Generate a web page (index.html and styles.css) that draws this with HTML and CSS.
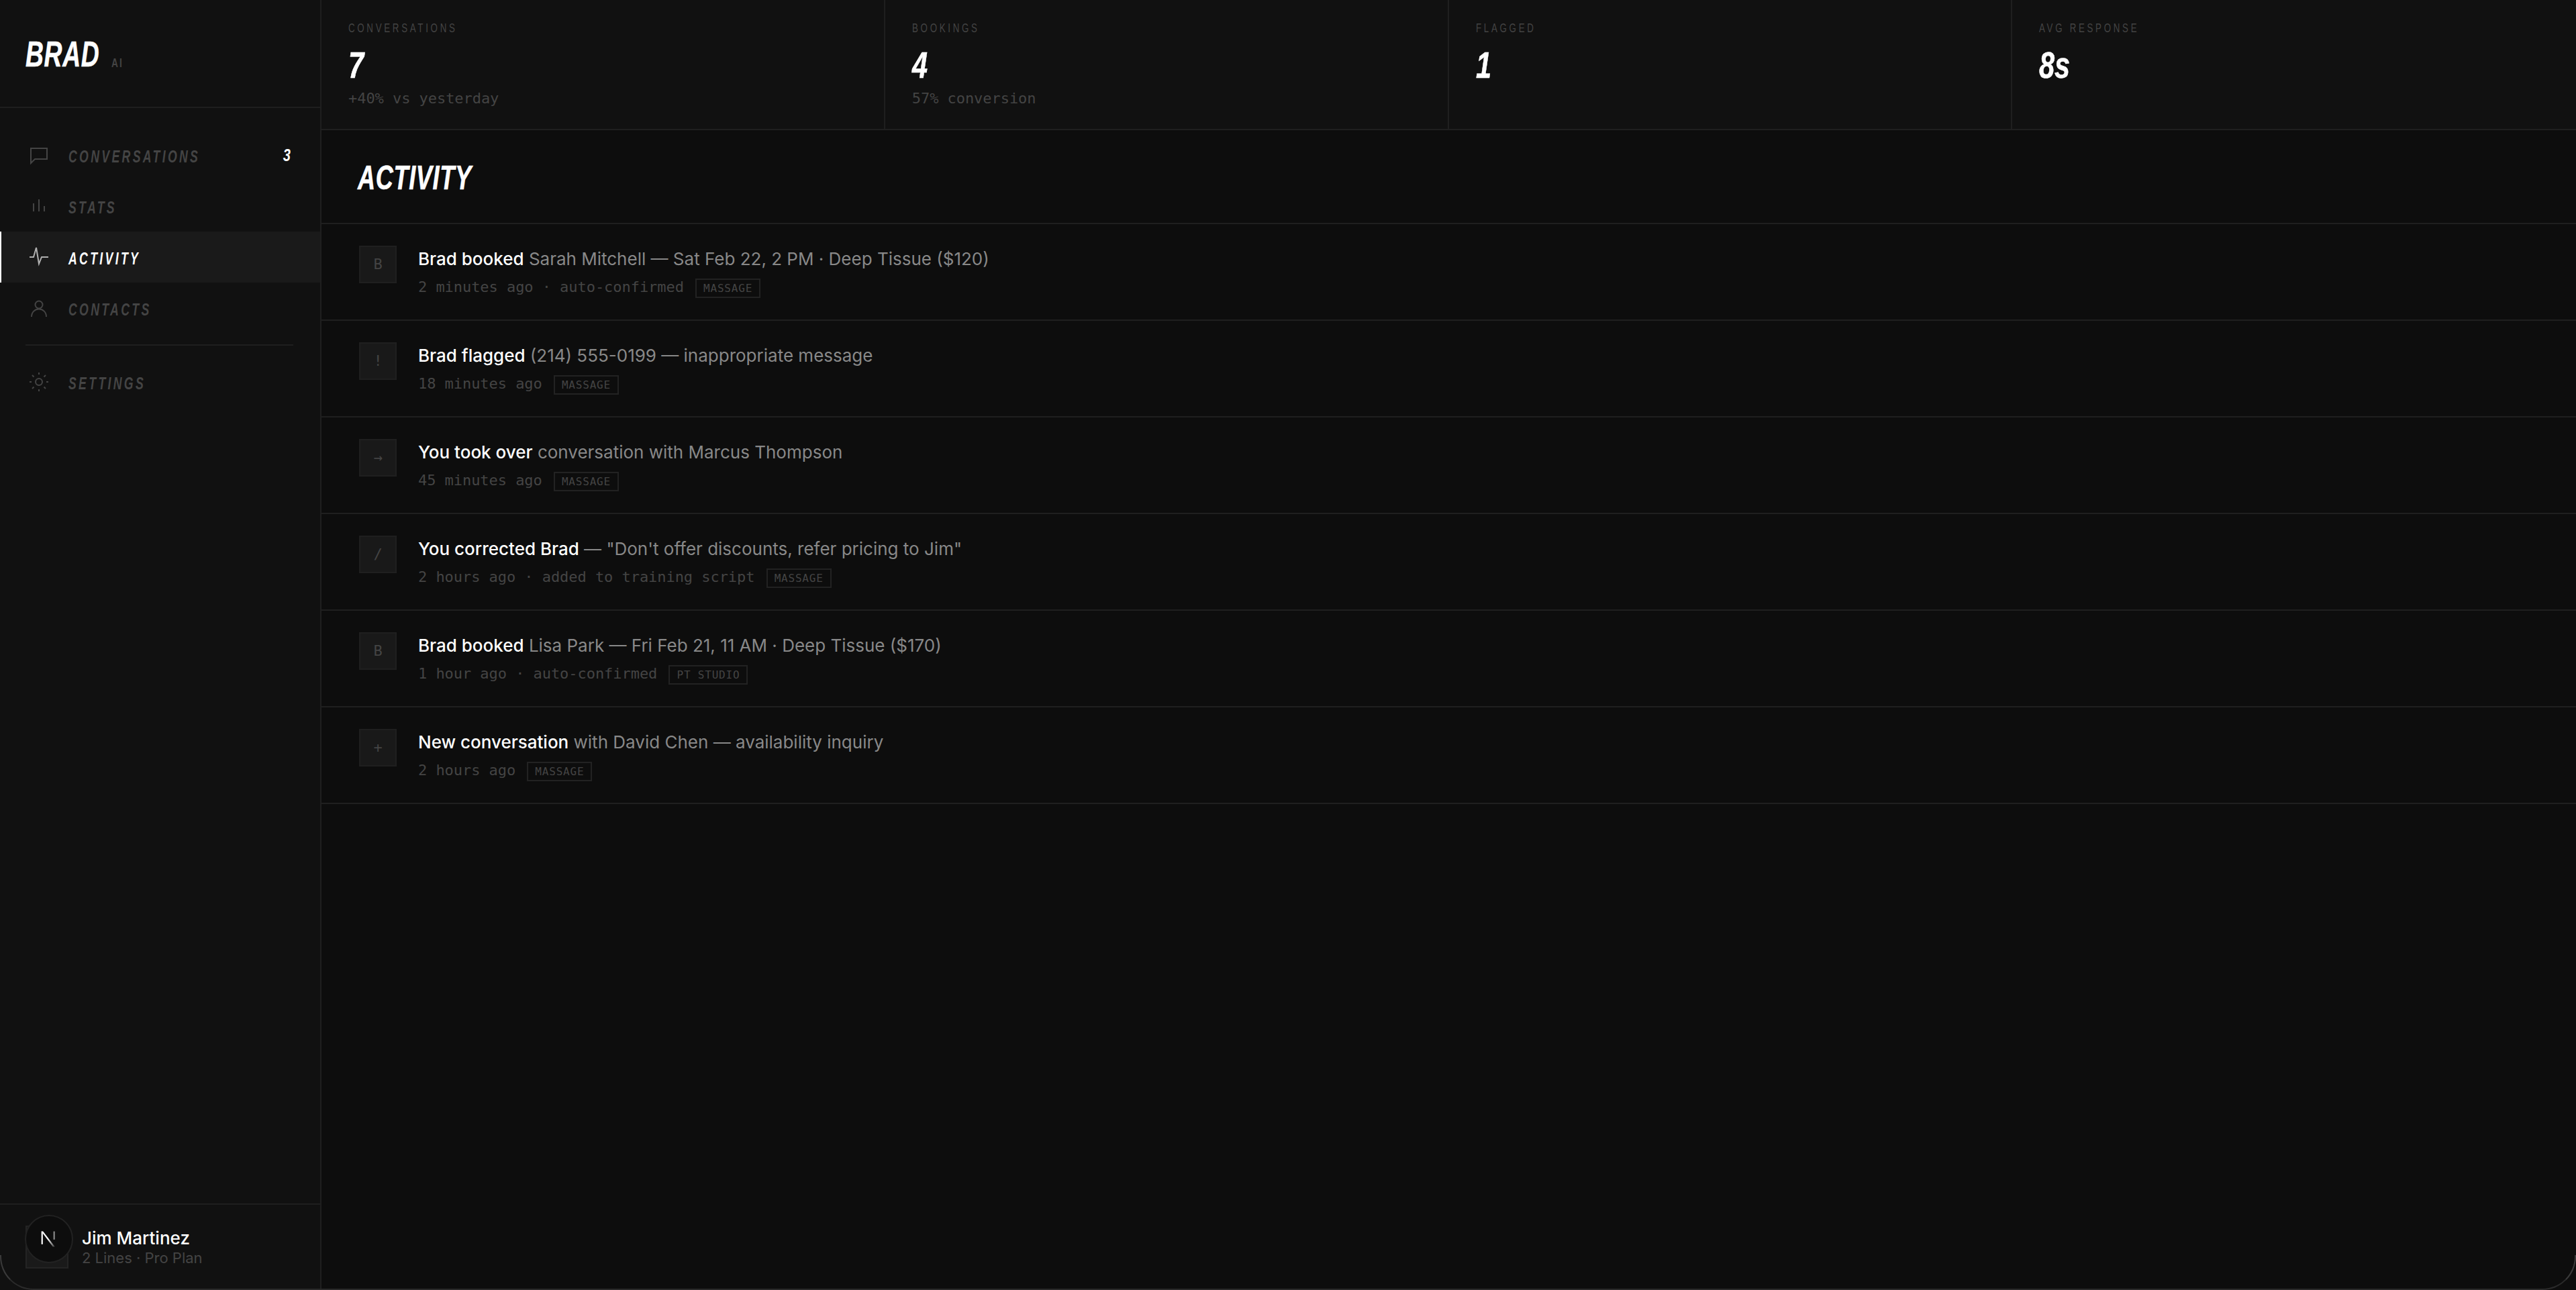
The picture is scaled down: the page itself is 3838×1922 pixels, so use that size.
FILE: index.html
```html
<!DOCTYPE html>
<html lang="en">
<head>
  <meta charset="UTF-8" />
  <title>Brad AI - Activity</title>
  <link rel="stylesheet" href="styles.css">
</head>
<body>
  <div class="app">
    <aside class="sidebar">
      <div class="logo"><span class="logo-name">BRAD</span><span class="logo-tag">AI</span></div>
      <nav class="nav">
        <a class="nav-item">
          <svg class="nav-icon" viewBox="0 0 32 32"><path d="M4 6h24v16H10l-6 6z"/></svg>
          <span class="nav-label">CONVERSATIONS</span>
          <span class="nav-count">3</span>
        </a>
        <a class="nav-item">
          <svg class="nav-icon" viewBox="0 0 32 32"><path d="M8 12v12M16 6v18M24 16v8"/></svg>
          <span class="nav-label">STATS</span>
        </a>
        <a class="nav-item active">
          <svg class="nav-icon" viewBox="0 0 32 32"><path d="M2 16h6l4-14 4 24 4-10h10"/></svg>
          <span class="nav-label">ACTIVITY</span>
        </a>
        <a class="nav-item">
          <svg class="nav-icon" viewBox="0 0 32 32"><circle cx="16" cy="11" r="5.500"/><path d="M5 29c0-7 5-11.500 11-11.500s11 4.500 11 11.500"/></svg>
          <span class="nav-label">CONTACTS</span>
        </a>
        <div class="nav-divider"></div>
        <a class="nav-item">
          <svg class="nav-icon" viewBox="0 0 32 32"><circle cx="16" cy="16" r="5"/><path d="M16 2v3M16 27v3M2 16h3M27 16h3M6 6l2.500 2.500M23.500 23.500L26 26M6 26l2.500-2.500M23.500 8.500L26 6"/></svg>
          <span class="nav-label">SETTINGS</span>
        </a>
      </nav>
      <div class="user">
        <div class="user-avatar"></div>
        <div class="user-info">
          <div class="user-name">Jim Martinez</div>
          <div class="user-plan">2 Lines · Pro Plan</div>
        </div>
        <div class="dev-badge">
          <svg viewBox="0 0 32 32"><defs><linearGradient id="nfade" x1="0" y1="0" x2="1" y2="1"><stop offset="0.5" stop-color="#fff"/><stop offset="1" stop-color="#fff" stop-opacity="0.2"/></linearGradient></defs><path d="M3 3h2.500v22H3z" fill="#fff"/><path d="M3 3h3l20 26h-3.500z" fill="url(#nfade)"/><path d="M23.500 3H26v14h-2.500z" fill="#888"/></svg>
        </div>
      </div>
    </aside>

    <main class="main">
      <section class="stats">
        <div class="stat">
          <div class="stat-label">CONVERSATIONS</div>
          <div class="stat-value">7</div>
          <div class="stat-sub">+40% vs yesterday</div>
        </div>
        <div class="stat">
          <div class="stat-label">BOOKINGS</div>
          <div class="stat-value">4</div>
          <div class="stat-sub">57% conversion</div>
        </div>
        <div class="stat">
          <div class="stat-label">FLAGGED</div>
          <div class="stat-value">1</div>
        </div>
        <div class="stat">
          <div class="stat-label">AVG RESPONSE</div>
          <div class="stat-value">8s</div>
        </div>
      </section>

      <header class="page-head"><h1>ACTIVITY</h1></header>

      <div class="feed">
        <div class="feed-row">
          <div class="feed-icon">B</div>
          <div class="feed-body">
            <div class="feed-text"><strong>Brad booked</strong> Sarah Mitchell — Sat Feb 22, 2 PM · Deep Tissue ($120)</div>
            <div class="feed-meta">2 minutes ago · auto-confirmed <span class="tag">MASSAGE</span></div>
          </div>
        </div>
        <div class="feed-row">
          <div class="feed-icon">!</div>
          <div class="feed-body">
            <div class="feed-text"><strong>Brad flagged</strong> (214) 555-0199 — inappropriate message</div>
            <div class="feed-meta">18 minutes ago <span class="tag">MASSAGE</span></div>
          </div>
        </div>
        <div class="feed-row">
          <div class="feed-icon">→</div>
          <div class="feed-body">
            <div class="feed-text"><strong>You took over</strong> conversation with Marcus Thompson</div>
            <div class="feed-meta">45 minutes ago <span class="tag">MASSAGE</span></div>
          </div>
        </div>
        <div class="feed-row">
          <div class="feed-icon">/</div>
          <div class="feed-body">
            <div class="feed-text"><strong>You corrected Brad</strong> — "Don't offer discounts, refer pricing to Jim"</div>
            <div class="feed-meta">2 hours ago · added to training script <span class="tag">MASSAGE</span></div>
          </div>
        </div>
        <div class="feed-row">
          <div class="feed-icon">B</div>
          <div class="feed-body">
            <div class="feed-text"><strong>Brad booked</strong> Lisa Park — Fri Feb 21, 11 AM · Deep Tissue ($170)</div>
            <div class="feed-meta">1 hour ago · auto-confirmed <span class="tag">PT STUDIO</span></div>
          </div>
        </div>
        <div class="feed-row">
          <div class="feed-icon">+</div>
          <div class="feed-body">
            <div class="feed-text"><strong>New conversation</strong> with David Chen — availability inquiry</div>
            <div class="feed-meta">2 hours ago <span class="tag">MASSAGE</span></div>
          </div>
        </div>
      </div>
    </main>
    <div class="frame"></div>
  </div>
</body>
</html>
```

FILE: styles.css
```css
:root {
  --condensed: "Liberation Sans", sans-serif;
  --mono: "DejaVu Sans Mono", monospace;
  --line: #1f1f1f;
}
* { box-sizing: border-box; }
body {
  margin: 0;
  background: #111;
  color: #fff;
  font-family: Inter, sans-serif;
}
.app {
  position: relative;
  display: flex;
  height: 100vh;
  overflow: hidden;
}

/* no condensed face is installed, so these are squeezed by hand */
.logo-name, .logo-tag, .nav-label, .stat-label, .stat-value, h1 {
  white-space: nowrap;
  transform-origin: left center;
}

/* sidebar */
.sidebar {
  width: 479px;
  flex: none;
  display: flex;
  flex-direction: column;
  background: #111;
  border-right: 2px solid var(--line);
}
.logo {
  height: 161px;
  padding: 50px 38px 0;
  display: flex;
  align-items: flex-start;
  border-bottom: 2px solid var(--line);
}
.logo-name {
  width: 110px;
  font: italic 700 54px/60px var(--condensed);
  letter-spacing: 1px;
  transform: scaleX(0.69);
  -webkit-text-stroke: 0.6px #fff;
}
.logo-tag {
  margin: 32px 0 0 18px;
  font: 700 19px/24px var(--condensed);
  letter-spacing: 3px;
  color: #444;
  transform: scaleX(0.72);
}
.nav {
  flex: 1;
  padding-top: 32px;
}
.nav-item {
  height: 76px;
  padding-left: 42px;
  padding-right: 44px;
  display: flex;
  align-items: center;
  color: #444;
}
.nav-item.active {
  background: #1a1a1a;
  border-left: 2px solid #fff;
  padding-left: 40px;
  color: #fff;
}
.nav-icon {
  width: 32px;
  height: 32px;
  margin-right: 28px;
  flex: none;
  fill: none;
  stroke: currentColor;
  stroke-width: 2;
}
.active .nav-icon { stroke: #b0b0b0; }
.nav-label {
  margin-top: 3px;
  font: italic 700 26px/30px var(--condensed);
  letter-spacing: 4.9px;
  transform: scaleX(0.68);
}
.nav-count {
  margin-left: auto;
  font: italic 700 25px/30px var(--condensed);
  color: #fff;
  transform: scaleX(0.8);
  transform-origin: right center;
}
.nav-divider {
  height: 2px;
  margin: 16px 40px 16px 38px;
  background: var(--line);
}
.user {
  position: relative;
  height: 129px;
  padding: 31px 38px 0;
  display: flex;
  gap: 20px;
  border-top: 2px solid var(--line);
}
.user-avatar {
  width: 64px;
  height: 64px;
  flex: none;
  background: #1a1a1a;
  border: 2px solid #242424;
}
.user-info { padding-top: 4px; }
.user-name {
  font-size: 26px;
  line-height: 30px;
  font-weight: 500;
}
.user-plan {
  font-size: 22px;
  line-height: 28px;
  color: #444;
}
.dev-badge {
  position: absolute;
  left: 37px;
  top: 15px;
  width: 72px;
  height: 72px;
  display: flex;
  align-items: center;
  justify-content: center;
  background: #0d0d0d;
  border: 2px solid #222;
  border-radius: 50%;
}
.dev-badge svg { width: 28px; height: 28px; }

/* main column */
.main {
  flex: 1;
  min-width: 0;
  background: #0d0d0d;
}
.stats {
  height: 194px;
  display: grid;
  grid-template-columns: repeat(4, 1fr);
  background: #111;
  border-bottom: 2px solid var(--line);
}
.stat {
  padding: 30px 40px 0;
  border-right: 2px solid var(--line);
}
.stat:last-child { border-right: none; }
.stat-label {
  font: 400 19px/24px var(--condensed);
  letter-spacing: 5.3px;
  color: #444;
  transform: scaleX(0.7);
}
.stat-value {
  margin-top: 13px;
  font: italic 700 56px/60px var(--condensed);
  transform: scaleX(0.74);
  -webkit-text-stroke: 0.6px #fff;
}
.stat-sub {
  margin-top: 5px;
  font: 22px/30px var(--mono);
  letter-spacing: -0.05px;
  color: #444;
}
.page-head {
  height: 140px;
  padding: 4px 0 0 54px;
  display: flex;
  align-items: center;
  border-bottom: 2px solid var(--line);
}
h1 {
  margin: 0;
  font: italic 700 50px/60px var(--condensed);
  letter-spacing: 1px;
  transform: scaleX(0.72);
  -webkit-text-stroke: 0.6px #fff;
}
.feed-row {
  height: 144px;
  padding: 32px 56px 0;
  display: flex;
  gap: 32px;
  border-bottom: 2px solid var(--line);
}
.feed-icon {
  width: 56px;
  height: 56px;
  flex: none;
  display: flex;
  align-items: center;
  justify-content: center;
  background: #191919;
  border: 2px solid #1f1f1f;
  font: 22px/1 var(--mono);
  color: #444;
}
.feed-body { padding-top: 2px; }
.feed-text {
  font-size: 26px;
  line-height: 36px;
  color: #888;
}
.feed-text strong {
  font-weight: 500;
  color: #fff;
}
.feed-meta {
  margin-top: 9px;
  font: 22px/30px var(--mono);
  letter-spacing: -0.05px;
  color: #444;
}
.tag {
  display: inline-block;
  margin-left: 4px;
  padding: 0 10px;
  border: 2px solid #222;
  font: 16px/25px var(--mono);
  letter-spacing: 0.8px;
  color: #444;
  vertical-align: middle;
}

/* rounded window edge, only the bottom corners show */
.frame {
  position: absolute;
  left: 0;
  right: 0;
  bottom: 0;
  height: 52px;
  border: 2px solid #3a3a3a;
  border-top: none;
  border-bottom-color: #2a2a2a;
  border-radius: 0 0 50px 50px;
  pointer-events: none;
}
```
